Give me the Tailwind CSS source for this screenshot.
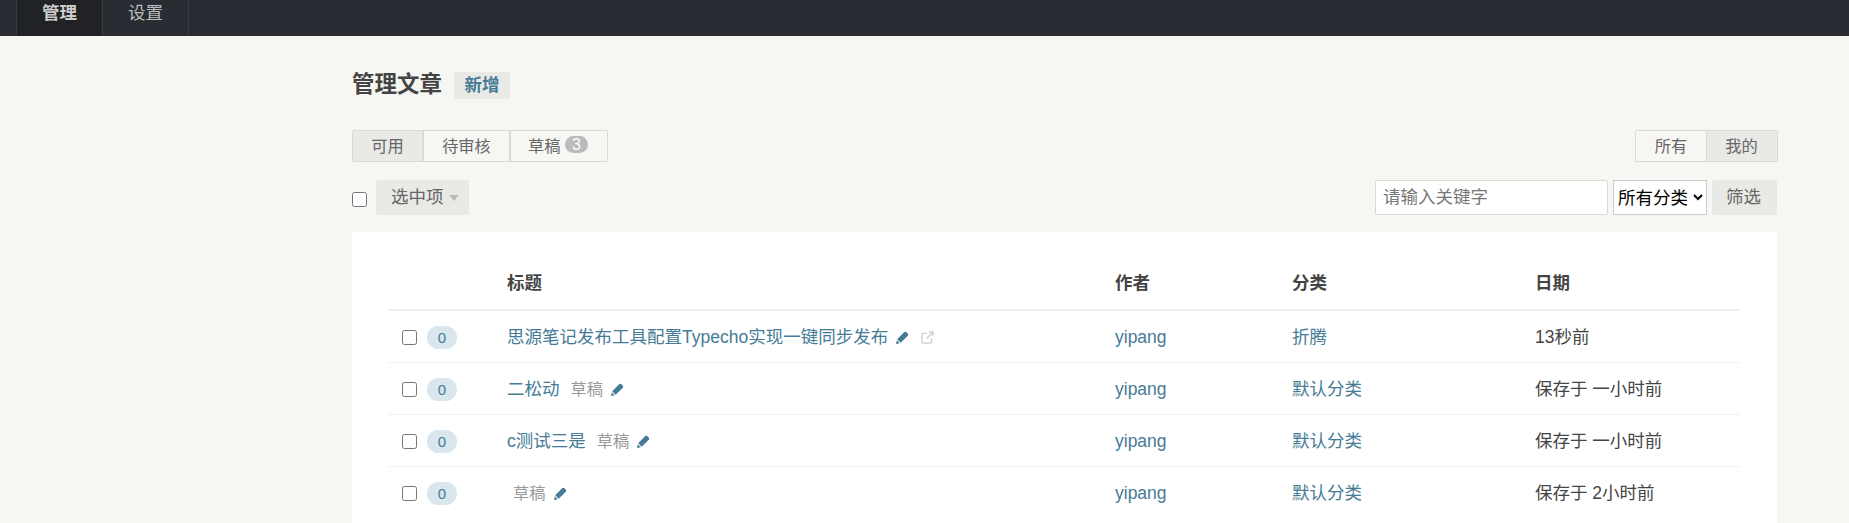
<!DOCTYPE html>
<html lang="zh-CN">
<head>
<meta charset="utf-8">
<title>管理文章</title>
<script src="https://cdn.jsdelivr.net/npm/@tailwindcss/browser@4"></script>
</head>
<body class="h-[523px] overflow-hidden bg-[#f6f6f3] text-[17.5px] text-[#444] font-['Liberation_Sans','Noto_Sans_CJK_SC',sans-serif]">
<nav class="flex h-[36px] bg-[#292d33] pl-[16px] text-[17.5px] leading-[26px] items-start">
  <a class="w-[87px] h-[36px] bg-[#202225] border-x border-[#383b41] text-center font-bold text-[#ccc]">管理</a>
  <a class="w-[86px] h-[36px] border-r border-[#383b41] text-center text-[#bbb]">设置</a>
</nav>
<main class="pl-[352px] pr-[72px]">
  <div class="flex items-center h-[36px] mt-[31px] gap-[12px]">
    <h2 class="text-[22.5px] font-bold text-[#444] leading-[36px]">管理文章</h2>
    <a class="h-[27px] w-[56px] rounded-[2px] bg-[#e9e9e6] text-center text-[17.5px] font-bold leading-[27px] text-[#467b96]">新增</a>
  </div>
  <div class="flex justify-between mt-[27px] mr-[-1px]">
    <div class="flex h-[32px] rounded-[2px] border border-[#d9d9d6] text-[16.25px] leading-[31px] text-[#666]">
      <a class="w-[69px] bg-[#e9e9e6] text-center">可用</a>
      <a class="w-[87px] border-l-2 border-[#d9d9d6] text-center">待审核</a>
      <a class="w-[98px] border-l-2 border-[#d9d9d6] pl-[17px]">草稿 <span class="inline-block h-[17px] w-[23px] rounded-full bg-[#bbb] text-center align-[2px] text-[16px] leading-[17px] text-white">3</span></a>
    </div>
    <div class="flex h-[32px] rounded-[2px] border border-[#d9d9d6] text-[16.25px] leading-[31px] text-[#666]">
      <a class="w-[70px] text-center">所有</a>
      <a class="w-[71px] border-l border-[#d9d9d6] bg-[#e9e9e6] pr-[1px] text-center">我的</a>
    </div>
  </div>
  <div class="flex items-center justify-between mt-[18px] h-[35px]">
    <div class="flex items-center">
      <input type="checkbox" class="mr-[9px] h-[15px] w-[15px] mt-[4px]">
      <button class="flex h-[35px] w-[93px] items-center gap-[5px] rounded-[2px] bg-[#e9e9e6] pl-[15px] text-[#666]">选中项<span class="mt-[1px] h-0 w-0 border-x-[5px] border-t-[6px] border-x-transparent border-t-[#bbb]"></span></button>
    </div>
    <div class="flex items-center">
      <input type="text" placeholder="请输入关键字" class="h-[35px] w-[233px] rounded-[2px] border border-[#d9d9d6] bg-white px-[7px] text-[17.5px] placeholder:text-[#777]">
      <select class="ml-[5px] h-[35px] w-[94px] border border-[#ccc] bg-white pl-0 text-[17.5px] text-black"><option>所有分类</option></select>
      <button class="ml-[5px] h-[35px] w-[65px] rounded-[2px] bg-[#e9e9e6] pr-[2px] text-[#666]">筛选</button>
    </div>
  </div>
  <section class="mt-[17px] bg-white pl-[37px] pr-[38px] pt-[20px] h-[400px]">
    <table class="w-full table-fixed border-collapse">
      <colgroup><col class="w-[118px]"><col class="w-[608px]"><col class="w-[177px]"><col class="w-[243px]"><col></colgroup>
      <thead>
        <tr class="h-[58px] border-b-2 border-[#f0f0ec] text-left">
          <th></th><th class="pt-[5px] font-bold">标题</th><th class="pt-[5px] font-bold">作者</th><th class="pt-[5px] font-bold">分类</th><th class="pt-[5px] font-bold">日期</th>
        </tr>
      </thead>
      <tbody class="[&_td]:pt-[2px]">
        <tr class="h-[52px] border-b border-[#f0f0ec]">
          <td><div class="flex items-center pl-[13px]"><input type="checkbox" class="h-[15px] w-[15px]"><span class="ml-[10px] h-[23px] w-[30px] rounded-[12px] bg-[#d9e6ee] text-center text-[15px] leading-[23px] text-[#467b96]">0</span></div></td>
          <td class="text-[#467b96]"><div class="flex items-center">思源笔记发布工具配置Typecho实现一键同步发布
            <svg class="ml-[8px] h-[13px] w-[13px] fill-[#467b96]" viewBox="0 0 14 14"><path d="M9 1.2Q10 .4 11 1.2L12.8 3Q13.6 4 12.8 5L5 12.7 1.3 9zM.9 10 4 13.1 0 14z"/></svg>
            <svg class="ml-[12px] h-[13px] w-[13px] fill-none stroke-[#ccc] stroke-[1.4]" viewBox="0 0 14 14"><path d="M11.5 8v3.5a1.5 1.5 0 0 1-1.500 1.500H2.500A1.500 1.500 0 0 1 1 11.500V4A1.500 1.500 0 0 1 2.500 2.500H6M8.500 1H13V5.500M13 1 6 8"/></svg>
          </div></td>
          <td class="text-[#467b96]">yipang</td><td class="text-[#467b96]">折腾</td><td>13秒前</td>
        </tr>
        <tr class="h-[52px] border-b border-[#f0f0ec]">
          <td><div class="flex items-center pl-[13px]"><input type="checkbox" class="h-[15px] w-[15px]"><span class="ml-[10px] h-[23px] w-[30px] rounded-[12px] bg-[#d9e6ee] text-center text-[15px] leading-[23px] text-[#467b96]">0</span></div></td>
          <td class="text-[#467b96]"><div class="flex items-center">二松动<span class="ml-[11px] text-[16.25px] text-[#999]">草稿</span>
            <svg class="ml-[8px] h-[13px] w-[13px] fill-[#467b96]" viewBox="0 0 14 14"><path d="M9 1.2Q10 .4 11 1.2L12.8 3Q13.6 4 12.8 5L5 12.7 1.3 9zM.9 10 4 13.1 0 14z"/></svg>
          </div></td>
          <td class="text-[#467b96]">yipang</td><td class="text-[#467b96]">默认分类</td><td>保存于 一小时前</td>
        </tr>
        <tr class="h-[52px] border-b border-[#f0f0ec]">
          <td><div class="flex items-center pl-[13px]"><input type="checkbox" class="h-[15px] w-[15px]"><span class="ml-[10px] h-[23px] w-[30px] rounded-[12px] bg-[#d9e6ee] text-center text-[15px] leading-[23px] text-[#467b96]">0</span></div></td>
          <td class="text-[#467b96]"><div class="flex items-center">c测试三是<span class="ml-[11px] text-[16.25px] text-[#999]">草稿</span>
            <svg class="ml-[8px] h-[13px] w-[13px] fill-[#467b96]" viewBox="0 0 14 14"><path d="M9 1.2Q10 .4 11 1.2L12.8 3Q13.6 4 12.8 5L5 12.7 1.3 9zM.9 10 4 13.1 0 14z"/></svg>
          </div></td>
          <td class="text-[#467b96]">yipang</td><td class="text-[#467b96]">默认分类</td><td>保存于 一小时前</td>
        </tr>
        <tr class="h-[52px]">
          <td><div class="flex items-center pl-[13px]"><input type="checkbox" class="h-[15px] w-[15px]"><span class="ml-[10px] h-[23px] w-[30px] rounded-[12px] bg-[#d9e6ee] text-center text-[15px] leading-[23px] text-[#467b96]">0</span></div></td>
          <td class="text-[#467b96]"><div class="flex items-center"><span class="ml-[6px] text-[16.25px] text-[#999]">草稿</span>
            <svg class="ml-[8px] h-[13px] w-[13px] fill-[#467b96]" viewBox="0 0 14 14"><path d="M9 1.2Q10 .4 11 1.2L12.8 3Q13.6 4 12.8 5L5 12.7 1.3 9zM.9 10 4 13.1 0 14z"/></svg>
          </div></td>
          <td class="text-[#467b96]">yipang</td><td class="text-[#467b96]">默认分类</td><td>保存于 2小时前</td>
        </tr>
      </tbody>
    </table>
  </section>
</main>
</body>
</html>
